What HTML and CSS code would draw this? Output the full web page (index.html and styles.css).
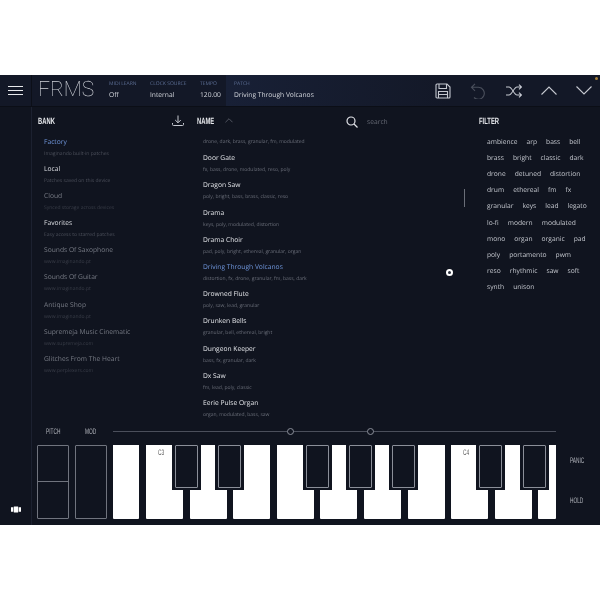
FILE: index.html
```html
<!DOCTYPE html>
<html>
<head>
    <meta charset="UTF-8">
    <title>FRMS</title>
    <link rel="stylesheet" href="styles.css">
</head>
<body>
<div class="app">
    <div class="topbar">
        <div class="menu-btn"><span></span><span></span><span></span></div>
        <div class="logo">FRMS</div>
        <div class="field midi"><div class="field-label">MIDI LEARN</div><div class="field-value">Off</div></div>
        <div class="field clock"><div class="field-label">CLOCK SOURCE</div><div class="field-value">Internal</div></div>
        <div class="field tempo"><div class="field-label">TEMPO</div><div class="field-value">120.00</div></div>
        <div class="patch">
            <div class="field-label">PATCH</div>
            <div class="field-value">Driving Through Volcanos</div>
        </div>
        <div class="tools">
            <svg class="tool" width="16" height="16" viewBox="0 0 16 16" fill="none" stroke="#c4c7cf" stroke-width="1.1">
                <path d="M1 2a1 1 0 0 1 1-1h10l3 3v10a1 1 0 0 1-1 1h-12a1 1 0 0 1-1-1z"/>
                <path d="M4 1v4.500h7.500v-4.500M3.500 15v-6.500h9v6.500M3.500 11.500h9"/>
            </svg>
            <svg class="tool" width="16" height="16" viewBox="0 0 16 16" fill="none" stroke="#4a4f5c" stroke-width="1.1">
                <path d="M5 .8 1.500 4.300l3.500 3.500M1.500 4.300h7a6 6 0 1 1-4.500 10.200"/>
            </svg>
            <svg class="tool" width="16" height="14" viewBox="0 0 16 14" fill="none" stroke="#c6c9d1" stroke-width="1.1">
                <path d="M0 3h3c3 0 5 8 8 8h4.500M0 11h3c3 0 5-8 8-8h4.500M13 .6 15.500 3l-2.500 2.400M13 8.600l2.500 2.400-2.500 2.400"/>
            </svg>
            <svg class="tool" width="16" height="9" viewBox="0 0 16 9" fill="none" stroke="#c6c9d1" stroke-width="1.100"><path d="M.5 8.500 8 1l7.500 7.500"/></svg>
            <svg class="tool" width="16" height="9" viewBox="0 0 16 9" fill="none" stroke="#c6c9d1" stroke-width="1.100"><path d="M.5.500 8 8l7.500-7.500"/></svg>
        </div>
        <div class="status-dot"></div>
    </div>

    <div class="middle">
        <div class="rail">
            <svg class="rail-icon" width="10" height="7" viewBox="0 0 13 9" fill="#fff">
                <path d="M0 1.500h3v6h-3zM3.700.5h5.600v8h-5.600zM10 1.500h3v6h-3z"/>
            </svg>
        </div>
        <div class="content">
            <div class="browser">
                <div class="col bank">
                    <div class="col-head">
                        <span class="heading">BANK</span>
                        <svg width="12" height="12" viewBox="0 0 12 12" fill="none" stroke="#c6c9d1" stroke-width="1">
                            <path d="M6 .5v7M3.200 5 6 7.800 8.800 5M.5 8v1.500q0 1 1 1h9q1 0 1-1V8"/>
                        </svg>
                    </div>
                    <div class="rows">
                        <div class="row"><div class="title blue">Factory</div><div class="sub">Imaginando built-in patches</div></div>
                        <div class="row"><div class="title light">Local</div><div class="sub">Patches saved on this device</div></div>
                        <div class="row"><div class="title off">Cloud</div><div class="sub faint">Synced storage across devices</div></div>
                        <div class="row"><div class="title light">Favorites</div><div class="sub">Easy access to starred patches</div></div>
                        <div class="row"><div class="title off">Sounds Of Saxophone</div><div class="sub faint">www.imaginando.pt</div></div>
                        <div class="row"><div class="title off">Sounds Of Guitar</div><div class="sub faint">www.imaginando.pt</div></div>
                        <div class="row"><div class="title off">Antique Shop</div><div class="sub faint">www.imaginando.pt</div></div>
                        <div class="row"><div class="title off">Supremeja Music Cinematic</div><div class="sub faint">www.supremeja.com</div></div>
                        <div class="row"><div class="title off">Glitches From The Heart</div><div class="sub faint">www.perplexers.com</div></div>
                    </div>
                </div>

                <div class="col name">
                    <div class="col-head">
                        <div class="name-head">
                            <span class="heading">NAME</span>
                            <svg width="8" height="5" viewBox="0 0 9 5" fill="none" stroke="#5a5e69" stroke-width="1"><path d="M.5 4.500 4.500.5l4 4"/></svg>
                        </div>
                        <div class="search">
                            <svg width="12" height="12" viewBox="0 0 12 12" fill="none" stroke="#e0e2e7" stroke-width="1.200">
                                <circle cx="5" cy="5" r="4"/><path d="M8 8l3.500 3.500"/>
                            </svg>
                            <span>search</span>
                        </div>
                    </div>
                    <div class="rows">
                        <div class="row cut"><div class="sub">drone, dark, brass, granular, fm, modulated</div></div>
                        <div class="row"><div class="title">Door Gate</div><div class="sub">fx, bass, drone, modulated, reso, poly</div></div>
                        <div class="row"><div class="title">Dragon Saw</div><div class="sub">poly, bright, bass, brass, classic, reso</div></div>
                        <div class="row"><div class="title">Drama</div><div class="sub">keys, poly, modulated, distortion</div></div>
                        <div class="row"><div class="title">Drama Choir</div><div class="sub">pad, poly, bright, ethereal, granular, organ</div></div>
                        <div class="row"><div class="title blue">Driving Through Volcanos</div><div class="sub">distortion, fx, drone, granular, fm, bass, dark</div></div>
                        <div class="row"><div class="title">Drowned Flute</div><div class="sub">poly, saw, lead, granular</div></div>
                        <div class="row"><div class="title">Drunken Bells</div><div class="sub">granular, bell, ethereal, bright</div></div>
                        <div class="row"><div class="title">Dungeon Keeper</div><div class="sub">bass, fx, granular, dark</div></div>
                        <div class="row"><div class="title">Dx Saw</div><div class="sub">fm, lead, poly, classic</div></div>
                        <div class="row"><div class="title">Eerie Pulse Organ</div><div class="sub">organ, modulated, bass, saw</div></div>
                    </div>
                    <div class="scrollbar"></div>
                    <div class="fav-dot"></div>
                </div>

                <div class="col filter">
                    <div class="col-head"><span class="heading">FILTER</span></div>
                    <div class="tags">
                        <span>ambience</span><span>arp</span><span>bass</span><span>bell</span>
                        <span>brass</span><span>bright</span><span>classic</span><span>dark</span>
                        <span>drone</span><span>detuned</span><span>distortion</span>
                        <span>drum</span><span>ethereal</span><span>fm</span><span>fx</span>
                        <span>granular</span><span>keys</span><span>lead</span><span>legato</span>
                        <span>lo-fi</span><span>modern</span><span>modulated</span>
                        <span>mono</span><span>organ</span><span>organic</span><span>pad</span>
                        <span>poly</span><span>portamento</span><span>pwm</span>
                        <span>reso</span><span>rhythmic</span><span>saw</span><span>soft</span>
                        <span>synth</span><span>unison</span>
                    </div>
                </div>
            </div>

            <div class="keys-area">
                <div class="wheels">
                    <div class="wheel-labels"><span class="tiny pitch-label">PITCH</span><span class="tiny">MOD</span></div>
                    <div class="wheel-boxes">
                        <div class="wheel pitch"></div>
                        <div class="wheel"></div>
                    </div>
                </div>
                <div class="keyboard-wrap">
                    <div class="slider"><span class="knob"></span><span class="knob"></span></div>
                    <div class="keyboard">
                        <div class="white first"></div>
                        <div class="white"><span class="note tiny">C3</span></div>
                        <div class="white"></div>
                        <div class="white"></div>
                        <div class="white"></div>
                        <div class="white"></div>
                        <div class="white"></div>
                        <div class="white"></div>
                        <div class="white"><span class="note tiny">C4</span></div>
                        <div class="white"></div>
                        <div class="white last"></div>
                        <div class="black b1"></div>
                        <div class="black b2"></div>
                        <div class="black b3"></div>
                        <div class="black b4"></div>
                        <div class="black b5"></div>
                        <div class="black b6"></div>
                        <div class="black b7"></div>
                    </div>
                </div>
                <div class="side-btns"><span class="tiny">PANIC</span><span class="tiny">HOLD</span></div>
            </div>
        </div>
    </div>
</div>
</body>
</html>
```

FILE: styles.css
```css
* {
    box-sizing: border-box;
}

body {
    margin: 0;
    padding-top: 75px;
    background: #fff;
    font-family: "Open Sans", sans-serif;
    text-rendering: geometricPrecision;
}

.app {
    width: 600px;
    height: 450px;
    background: #10141f;
    display: flex;
    flex-direction: column;
    overflow: hidden;
}

/* own layer keeps the small text grey instead of colour fringed */
.field-label, .field-value, .logo, .rows, .tags, .search, .heading, .tiny {
    will-change: opacity;
}

/* top bar */
.topbar {
    height: 32px;
    display: flex;
    align-items: stretch;
    position: relative;
    background: #131827;
    border-bottom: 1px solid #0b0e16;
}

.menu-btn {
    width: 32px;
    display: flex;
    flex-direction: column;
    justify-content: center;
    gap: 2.500px;
    padding-left: 8px;
    border-right: 1px solid #0c0f18;
}

.menu-btn span {
    width: 15px;
    height: 1.500px;
    background: #e8e9ec;
}

.logo {
    width: 77px;
    padding-left: 6px;
    font-family: Roboto, sans-serif;
    font-weight: 100;
    font-size: 21px;
    line-height: 31px;
    color: #d0d3d9;
}

.field {
    padding-top: 5px;
}

.midi { width: 41px; }
.clock { width: 50px; }
.tempo { width: 26px; }

.field-label {
    font-size: 5px;
    line-height: 8px;
    color: #5f7198;
    white-space: nowrap;
}

.field-value {
    font-size: 6.700px;
    line-height: 12px;
    margin-top: 1px;
    color: #d4d7dd;
    white-space: nowrap;
}

.patch {
    flex: 1;
    padding: 5px 0 0 8px;
    background: linear-gradient(90deg, #182036, #131827 60%);
}

.tools {
    position: absolute;
    right: 8px;
    top: 0;
    height: 31px;
    display: flex;
    align-items: center;
    gap: 19.200px;
}

.status-dot {
    position: absolute;
    top: 2px;
    right: 2px;
    width: 3px;
    height: 3px;
    border-radius: 50%;
    background: #a8803a;
}

/* middle */
.middle {
    flex: 1;
    display: flex;
    min-height: 0;
}

.rail {
    width: 32px;
    border-right: 1px solid #1c2130;
    display: flex;
    justify-content: center;
    align-items: flex-end;
    padding-bottom: 12px;
}

.content {
    flex: 1;
    display: flex;
    flex-direction: column;
    min-width: 0;
}

.browser {
    height: 318px;
    display: flex;
    overflow: hidden;
}

.col {
    position: relative;
}

.bank {
    width: 165px;
    padding-left: 6px;
}

.name {
    width: 281px;
}

.filter {
    flex: 1;
    padding-left: 1px;
}

.col-head {
    height: 27px;
    display: flex;
    align-items: center;
    justify-content: space-between;
}

.bank .col-head {
    padding-right: 13px;
}

.name-head {
    display: flex;
    align-items: center;
    gap: 8px;
}

/* no condensed face is installed, so the headings are squeezed */
.heading {
    display: inline-block;
    width: 20px;
    font-family: "Liberation Sans", sans-serif;
    font-weight: bold;
    font-size: 9px;
    color: #e6e8ec;
    transform: scaleX(.65);
    transform-origin: left center;
}

.tiny {
    display: inline-block;
    font-family: "Liberation Sans", sans-serif;
    font-size: 8px;
    transform: scaleX(.6);
    transform-origin: left center;
}

.search {
    width: 132px;
    display: flex;
    align-items: center;
    gap: 9px;
    padding-top: 2px;
    font-size: 6.700px;
    color: #666a75;
}

.rows {
    padding-left: 6px;
}

.row {
    height: 27.200px;
    white-space: nowrap;
}

.row.cut {
    height: 17.200px;
    padding-top: 3px;
    margin-top: -1px;
}

.bank .rows {
    margin-top: .5px;
}

.name .rows {
    padding-top: 1px;
}

.title {
    font-size: 6.700px;
    line-height: 14px;
    color: #e2e4e8;
}

.title.blue { color: #7097dd; }
.title.light { color: #dcdee3; }
.title.off { color: #777b85; }

.sub {
    font-size: 5px;
    line-height: 11px;
    color: #6a6e79;
}

.sub.faint {
    color: #3f434e;
}

.bank .sub {
    color: #4c505b;
}

.bank .sub.faint {
    color: #3a3e49;
}

.scrollbar {
    position: absolute;
    left: 267px;
    top: 82px;
    width: 1px;
    height: 18px;
    background: #6a6e78;
}

.fav-dot {
    position: absolute;
    left: 249px;
    top: 162px;
    width: 7px;
    height: 7px;
    border-radius: 50%;
    border: 2px solid #fff;
    background: #2a2e3a;
}

.tags {
    display: flex;
    flex-wrap: wrap;
    width: 102px;
    margin-left: 8px;
    column-gap: 9px;
    font-size: 6.700px;
    line-height: 16.200px;
    color: #c4c7ce;
    margin-top: -.5px;
}

/* wheels and keys */
.keys-area {
    flex: 1;
    display: flex;
}

.wheels {
    width: 81px;
    padding-left: 5px;
}

.wheel-labels {
    height: 20px;
    display: flex;
    padding: 3px 0 0 9px;
    line-height: 8px;
    color: #b4b7be;
}

.pitch-label {
    width: 39px;
}

.wheel-boxes {
    display: flex;
    gap: 6px;
}

.wheel {
    width: 32px;
    height: 74px;
    border: 1px solid #70747e;
    border-radius: 1px;
}

.wheel.pitch {
    background: linear-gradient(#10141f 48.500%, #70747e 48.500%, #70747e 50%, #10141f 50%);
}

.keyboard-wrap {
    width: 443px;
}

.slider {
    height: 20px;
    position: relative;
    background: linear-gradient(#4b4f5b, #4b4f5b) left 6px / 100% 1px no-repeat;
}

.knob {
    position: absolute;
    top: 3px;
    width: 7px;
    height: 7px;
    border-radius: 50%;
    border: 1px solid #8b8f99;
    background: #10141f;
}

.knob:nth-child(1) { left: 174px; }
.knob:nth-child(2) { left: 254px; }

.keyboard {
    position: relative;
    height: 74px;
    display: flex;
    gap: 6.600px;
    overflow: hidden;
}

.white {
    width: 37px;
    flex: none;
    background: #fff;
    border-radius: 0 0 1px 1px;
    position: relative;
}

.white.first { width: 26.400px; }
.white.last { width: 18px; }

.note {
    position: absolute;
    left: 12px;
    top: 3px;
    color: #555;
}

.black {
    position: absolute;
    top: 0;
    width: 29px;
    height: 45px;
    background: #10141f;
}

.black::after {
    content: "";
    position: absolute;
    left: 3px;
    right: 3px;
    top: 0;
    bottom: 2px;
    border: 1px solid #8b8f99;
    border-radius: 1px;
}

.b1 { left: 59px; }
.b2 { left: 102px; }
.b3 { left: 190px; }
.b4 { left: 233px; }
.b5 { left: 276px; }
.b6 { left: 363px; }
.b7 { left: 407px; }

.side-btns {
    flex: 1;
    display: flex;
    flex-direction: column;
    gap: 30px;
    padding: 31px 0 0 14px;
    line-height: 10px;
    color: #b4b7be;
}
```
